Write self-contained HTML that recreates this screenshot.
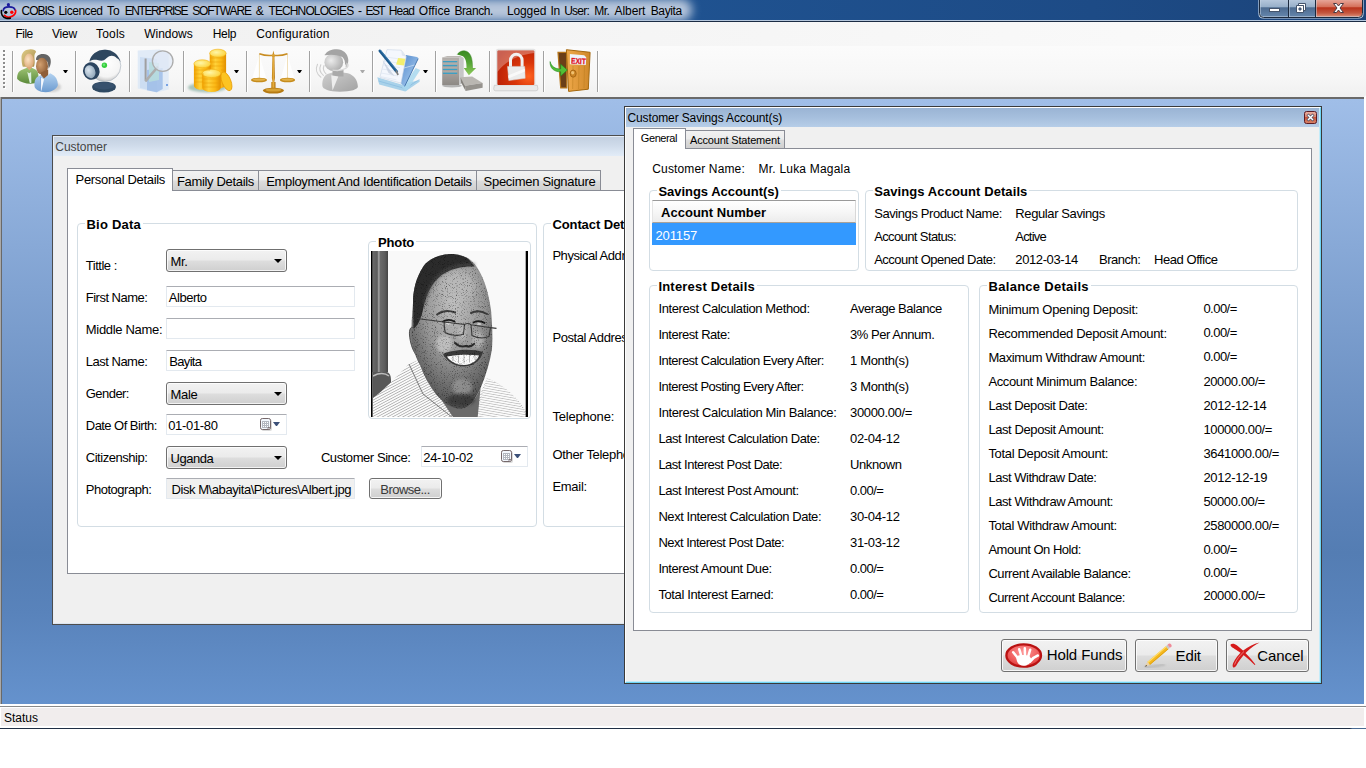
<!DOCTYPE html>
<html lang="en"><head><meta charset="utf-8"><title>COBIS</title>
<style>
html,body{margin:0;padding:0;background:#fff;overflow:hidden}
body{width:1366px;height:768px;position:relative;font-family:"Liberation Sans",sans-serif;font-size:13px;color:#000}
div,span.t,svg{position:absolute;box-sizing:border-box}
.t{white-space:pre}
.gb{border:1px solid #d3dde4;border-radius:4px}
.inp{background:#fff;border:1px solid #e3e9ef;border-top-color:#abadb3;border-radius:1px}
.cmb,.btn,.tab{background:linear-gradient(#f2f2f2 0,#ebebeb 47%,#dddddd 53%,#cfcfcf 100%)}
.cmb{border:1px solid #707070;border-radius:3px;box-shadow:inset 0 0 0 1px rgba(255,255,255,.75)}
.btn{border:1px solid #707070;border-radius:3px;box-shadow:inset 0 0 0 1px rgba(255,255,255,.8)}
.tab{border:1px solid #898c95;border-bottom:none}
.tabsel{border:1px solid #898c95;border-bottom:none;background:#fff}
.sep{width:1px;background:#a2a2a2;box-shadow:1px 0 0 #fff}
.arr{width:0;height:0;border-left:4px solid transparent;border-right:4px solid transparent;border-top:4px solid #000}
</style></head><body>
<div style="left:0px;top:0px;width:1366px;height:22px;background:linear-gradient(90deg,#2b5c9b 0,#1f5290 50%,#1d4b86 80%,#1b4379 100%);overflow:hidden"><div style="left:-30px;top:-1px;width:722px;height:22px;border-radius:11px;background:#c0cde0;filter:blur(5px);opacity:.95"></div></div>
<div style="left:0px;top:20px;width:1366px;height:1px;background:#b4c6dc"></div>
<div style="left:0px;top:21px;width:1366px;height:1px;background:#1b2c44"></div>
<span class="t" style="left:21.5px;top:4px;font-size:12px;line-height:14px;color:#000"><span style="display:inline-block;width:36.9px;letter-spacing:-1.008px">COBIS </span><span style="display:inline-block;width:48.6px;letter-spacing:-0.492px">Licenced </span><span style="display:inline-block;width:17.8px;letter-spacing:-0.037px">To </span><span style="display:inline-block;width:67.4px;letter-spacing:-1.448px">ENTERPRISE </span><span style="display:inline-block;width:63.5px;letter-spacing:-1.094px">SOFTWARE </span><span style="display:inline-block;width:12.8px;letter-spacing:0.296px">&amp; </span><span style="display:inline-block;width:89.5px;letter-spacing:-0.879px">TECHNOLOGIES </span><span style="display:inline-block;width:7.6px;letter-spacing:0.304px">- </span><span style="display:inline-block;width:23.1px;letter-spacing:-1.646px">EST </span><span style="display:inline-block;width:30.2px;letter-spacing:-0.772px">Head </span><span style="display:inline-block;width:35.6px;letter-spacing:0.029px">Office </span><span style="display:inline-block;width:52.5px;letter-spacing:-0.408px">Branch. </span><span style="display:inline-block;width:43.6px;letter-spacing:-0.124px">Logged </span><span style="display:inline-block;width:13.6px;letter-spacing:-0.404px">In </span><span style="display:inline-block;width:30.2px;letter-spacing:-0.714px">User: </span><span style="display:inline-block;width:20.3px;letter-spacing:-0.521px">Mr. </span><span style="display:inline-block;width:36.1px;letter-spacing:-0.108px">Albert </span><span style="display:inline-block;width:33.2px;letter-spacing:-0.359px">Bayita</span></span>
<div style="left:0px;top:22px;width:1366px;height:24px;background:linear-gradient(90deg,#f0f0f0 0,#f3f3f3 30%,#fbfbfb 100%)"></div>
<span class="t" style="left:15.4px;top:27px;font-size:12px;line-height:14px;letter-spacing:-0.484px;">File</span>
<span class="t" style="left:52px;top:27px;font-size:12px;line-height:14px;letter-spacing:-0.223px;">View</span>
<span class="t" style="left:96px;top:27px;font-size:12px;line-height:14px;letter-spacing:0.197px;">Tools</span>
<span class="t" style="left:144.2px;top:27px;font-size:12px;line-height:14px;letter-spacing:-0.026px;">Windows</span>
<span class="t" style="left:212.7px;top:27px;font-size:12px;line-height:14px;letter-spacing:-0.295px;">Help</span>
<span class="t" style="left:256.2px;top:27px;font-size:12px;line-height:14px;letter-spacing:0.163px;">Configuration</span>
<div style="left:0px;top:46px;width:1366px;height:51px;background:linear-gradient(#fbfbfb 0,#f7f7f7 60%,#f0f0f0 100%);border-radius:0 0 3px 0"></div>
<div style="left:4px;top:51px;width:2px;height:38px;background:repeating-linear-gradient(#fff 0,#fff 2px,transparent 2px,transparent 4px)"></div><div style="left:3px;top:50px;width:2px;height:38px;background:repeating-linear-gradient(#8c8c8c 0,#8c8c8c 2px,transparent 2px,transparent 4px)"></div>
<div class="sep" style="left:12px;top:51px;width:1px;height:41px;"></div>
<div class="sep" style="left:75px;top:51px;width:1px;height:41px;"></div>
<div class="sep" style="left:129px;top:51px;width:1px;height:41px;"></div>
<div class="sep" style="left:183px;top:51px;width:1px;height:41px;"></div>
<div class="sep" style="left:246px;top:51px;width:1px;height:41px;"></div>
<div class="sep" style="left:309px;top:51px;width:1px;height:41px;"></div>
<div class="sep" style="left:372px;top:51px;width:1px;height:41px;"></div>
<div class="sep" style="left:435px;top:51px;width:1px;height:41px;"></div>
<div class="sep" style="left:489px;top:51px;width:1px;height:41px;"></div>
<div class="sep" style="left:543px;top:51px;width:1px;height:41px;"></div>
<div class="sep" style="left:597px;top:51px;width:1px;height:41px;"></div>
<div class="arr" style="left:63px;top:70px;width:5px;height:3px;border-left-width:2.5px;border-right-width:2.5px;border-top-width:3px"></div>
<div class="arr" style="left:234px;top:70px;width:5px;height:3px;border-left-width:2.5px;border-right-width:2.5px;border-top-width:3px"></div>
<div class="arr" style="left:297px;top:70px;width:5px;height:3px;border-left-width:2.5px;border-right-width:2.5px;border-top-width:3px"></div>
<div class="arr" style="left:423px;top:70px;width:5px;height:3px;border-left-width:2.5px;border-right-width:2.5px;border-top-width:3px"></div>
<div class="arr" style="left:360px;top:70px;width:5px;height:3px;border-left-width:2.5px;border-right-width:2.5px;border-top-width:3px;border-top-color:#a9a9a9"></div>
<div style="left:0px;top:97px;width:1364px;height:607px;background:linear-gradient(#a0bee8 0,#688dc0 56%,#5b82b8 67%,#547db3 75%,#5983bb 85%,#6592cd 100%);border-top:2px solid #696969;border-left:2px solid #696969;border-top-color:#6a6a6a"></div>
<div style="left:0px;top:97px;width:1px;height:607px;background:#a9a9a9"></div>
<div style="left:0px;top:706px;width:1366px;height:1px;background:#8a8a8a"></div>
<div style="left:1px;top:708px;width:1363px;height:18px;background:#f1eded"></div>
<div style="left:0px;top:728px;width:1366px;height:1px;background:linear-gradient(90deg,#1f2e44 0,#1f2e44 98.8%,#4a6a92 99%)"></div>
<span class="t" style="left:4px;top:711px;font-size:12px;line-height:14px;letter-spacing:-0.003px;">Status</span>
<svg width="20" height="22" viewBox="0 0 20 22" style="left:0;top:0">
<circle cx="8.4" cy="4.7" r="1.6" fill="#1a1a9c"/>
<path d="M3.2 10.6C3.4 8 6 6.9 9 6.9c3.2 0 5.6 1 5.9 3" fill="none" stroke="#1a1a9c" stroke-width="1.7" stroke-linecap="round"/>
<circle cx="5.8" cy="12.3" r="1.6" fill="#000"/>
<circle cx="11.8" cy="12.2" r="1.7" fill="#f00"/>
<path d="M4.4 15.4c2 2 5.5 2.2 8.2.6 2.3-1.4 3.3-3.3 3-5.6" fill="none" stroke="#f00" stroke-width="1.7" stroke-linecap="round"/>
<path d="M1.4 10.6c-.5 3.2 1.2 6.6 4.8 7.6 1.4.4 2.8.3 4 0" fill="none" stroke="#000" stroke-width="1.7" stroke-linecap="round"/>
</svg>
<svg width="106" height="20" viewBox="1258 0 106 20" style="left:1258px;top:0">
<defs>
<linearGradient id="cg" x1="0" y1="0" x2="0" y2="1"><stop offset="0" stop-color="#b9cade"/><stop offset=".45" stop-color="#97afc9"/><stop offset=".5" stop-color="#4d6b90"/><stop offset="1" stop-color="#6485ab"/></linearGradient>
<linearGradient id="cr" x1="0" y1="0" x2="0" y2="1"><stop offset="0" stop-color="#e9aca0"/><stop offset=".45" stop-color="#d5705a"/><stop offset=".5" stop-color="#b9321b"/><stop offset=".8" stop-color="#c4573f"/><stop offset="1" stop-color="#d98a74"/></linearGradient>
</defs>
<path d="M1259.5-1v14.5q0 4 4 4h95q4 0 4-4v-14.5z" fill="#c9d7e7" stroke="#c9d7e7" stroke-width="2.2"/>
<path d="M1260.5-1v14.5q0 3 3 3h25v-17.5z" fill="url(#cg)"/>
<path d="M1289.500-1h26v17.500h-26z" fill="url(#cg)"/>
<path d="M1316.500-1h45.500v14.500q0 3-3 3h-42.500z" fill="url(#cr)"/>
<path d="M1259.500-1v14.500q0 4 4 4h95q4 0 4-4v-14.500M1288.500-1v18M1315.500-1v18" fill="none" stroke="#1c2a3e" stroke-width="1"/>
<rect x="1269.500" y="8.500" width="10" height="3" fill="#fff" stroke="#44546c" stroke-width="1"/>
<path d="M1298.500 3.500h7v7h-2v-5h-5z" fill="#fff" stroke="#44546c" stroke-width="1"/>
<path d="M1296.500 5.500h7v7h-7zM1299 8h2v2h-2z" fill="#fff" fill-rule="evenodd" stroke="#44546c" stroke-width="1"/>
<path d="M1333.500 3.500h3l2 2.500 2-2.500h3l-3.500 4.500 3.500 4.500h-3l-2-2.500-2 2.500h-3l3.500-4.500z" fill="#fff" stroke="#4a3a44" stroke-width="1" stroke-linejoin="round"/>
</svg>
<svg width="600" height="51" viewBox="0 46 600 51" style="left:0;top:46px">
<defs>
<radialGradient id="skinW" cx=".4" cy=".4" r=".7"><stop offset="0" stop-color="#fbe2c2"/><stop offset="1" stop-color="#d7a06e"/></radialGradient>
<radialGradient id="skinM" cx=".35" cy=".4" r=".75"><stop offset="0" stop-color="#d2a070"/><stop offset="1" stop-color="#86552f"/></radialGradient>
<linearGradient id="hairW" x1="0" y1="0" x2="1" y2="1"><stop offset="0" stop-color="#e0cc88"/><stop offset="1" stop-color="#a68a48"/></linearGradient>
<linearGradient id="grn" x1="0" y1="0" x2="0" y2="1"><stop offset="0" stop-color="#9cc272"/><stop offset="1" stop-color="#5b8a3a"/></linearGradient>
<linearGradient id="blu" x1="0" y1="0" x2="0" y2="1"><stop offset="0" stop-color="#b3d2f0"/><stop offset="1" stop-color="#6c9bd0"/></linearGradient>
<radialGradient id="camw" cx=".55" cy=".4" r=".65"><stop offset="0" stop-color="#ffffff"/><stop offset=".7" stop-color="#f4f4f4"/><stop offset="1" stop-color="#b4b4b4"/></radialGradient>
<radialGradient id="lens" cx=".4" cy=".35" r=".7"><stop offset="0" stop-color="#d9e4ee"/><stop offset="1" stop-color="#8fa5b8"/></radialGradient>
<linearGradient id="gold" x1="0" y1="0" x2="1" y2="0"><stop offset="0" stop-color="#f0a000"/><stop offset=".35" stop-color="#ffd23a"/><stop offset=".7" stop-color="#fbb714"/><stop offset="1" stop-color="#e08e00"/></linearGradient>
<radialGradient id="goldtop" cx=".4" cy=".4" r=".7"><stop offset="0" stop-color="#fff6a8"/><stop offset="1" stop-color="#fccf30"/></radialGradient>
<linearGradient id="brass" x1="0" y1="0" x2="1" y2="0"><stop offset="0" stop-color="#b97a12"/><stop offset=".5" stop-color="#e7ae3c"/><stop offset="1" stop-color="#a96a0c"/></linearGradient>
<radialGradient id="ghead" cx=".35" cy=".4" r=".75"><stop offset="0" stop-color="#ececec"/><stop offset="1" stop-color="#a6a6a6"/></radialGradient>
<linearGradient id="gbody" x1="0" y1="0" x2="1" y2="1"><stop offset="0" stop-color="#cfcfcf"/><stop offset="1" stop-color="#a2a2a2"/></linearGradient>
<linearGradient id="fold" x1="0" y1="0" x2="1" y2="1"><stop offset="0" stop-color="#4f86cb"/><stop offset="1" stop-color="#b5d6f4"/></linearGradient>
<linearGradient id="srv" x1="0" y1="0" x2="0" y2="1"><stop offset="0" stop-color="#b3aeaa"/><stop offset=".6" stop-color="#a39e9a"/><stop offset="1" stop-color="#8d8985"/></linearGradient>
<linearGradient id="garr" x1="0" y1="0" x2="0" y2="1"><stop offset="0" stop-color="#3a8a22"/><stop offset=".5" stop-color="#56a536"/><stop offset="1" stop-color="#8fcb5c"/></linearGradient>
<radialGradient id="redsq" cx=".85" cy=".75" r="1"><stop offset="0" stop-color="#ff6220"/><stop offset=".4" stop-color="#d9360a"/><stop offset="1" stop-color="#b31c06"/></radialGradient>
<linearGradient id="door" x1="0" y1="0" x2="1" y2="0"><stop offset="0" stop-color="#efa94a"/><stop offset="1" stop-color="#cf882a"/></linearGradient>
<filter id="b1"><feGaussianBlur stdDeviation="1.2"/></filter>
<filter id="b05"><feGaussianBlur stdDeviation=".5"/></filter>
</defs>

<!-- 1 users -->
<g>
<ellipse cx="52" cy="87" rx="9" ry="5" fill="#bdbdbd" opacity=".7" filter="url(#b1)"/>
<path d="M21.500 58C21.300 52.500 25 49.400 29.300 49.500c3-.6 6.600.6 6.800 2.400-1.200 1.200-1.800 2.800-1.700 5 .1 2.500.6 5 .1 7.500-.3 1.500-.6 2.200-.7 2.400h-11c-.8-2.200-1.200-5-1.300-8.800z" fill="url(#hairW)"/>
<ellipse cx="29" cy="61" rx="4.900" ry="7.500" fill="url(#skinW)"/>
<path d="M27 67h4.900v5.500H27z" fill="#dba878"/>
<path d="M17.200 79c-.4-5.500 1.800-8.600 5.600-9.600l4.200-1.600 2.300 2.500 2.400-2.500 3.200 1.400c2.500 1.200 3.500 3.500 3.500 6.100v7c-6 2.400-16 2-21.200-3.300z" fill="url(#grn)"/>
<path d="M27.300 72l2 1.300 1.800-1.300.3 10.800-1.600.4z" fill="#dcefe2"/>
<path d="M36.100 60c-.4-4 3-6.200 7.500-5.900 4.800.3 7.500 3.400 7.200 8-.2 3-1 5-2.200 6.600l-.6-5.200c-.3-1.600-1.200-2.600-2.600-2.800-3.200-.5-6.300-.9-9.300-.7z" fill="#646464"/>
<ellipse cx="42" cy="66.200" rx="6" ry="8.400" fill="url(#skinM)"/>
<path d="M41 72.500l7.200-3v9.500H41z" fill="#8f5e38"/>
<path d="M34.500 86c-.4-5.500 1.400-9 4.500-10l2-1 3 3.600 6.100-5.300 1.400.8c4 2 6.200 5.500 6.400 10.300.2 2.800-5 7.800-12.300 7.800-6.600 0-10.900-3-11.100-6.200z" fill="url(#blu)"/>
<path d="M41 77.600l3 1.600-2.600 11.600-.6-.2z" fill="#f4f8fd"/>
<path d="M40.600 77v13.600" stroke="#6f9bd0" stroke-width=".6"/>
</g>

<!-- 2 webcam -->
<g>
<ellipse cx="104" cy="87" rx="11.900" ry="5.600" fill="#2f4962"/>
<ellipse cx="104" cy="85.800" rx="10.500" ry="3.600" fill="#3a5672" opacity=".7"/>
<circle cx="105" cy="65.700" r="15.800" fill="url(#camw)" stroke="#a3aebb" stroke-width=".6"/>
<path d="M89.400 61.500C90.800 54.500 97 49.700 105 49.700c7.500 0 13.500 4.800 15.600 12.300-1.200-1.800-2.500-3.200-3.700-3.700-1.800-1.800-3.600-2.500-5-2.500-2.500 0-3.600 1-4.600 1.800-1.600 1.400-3 2.800-4.600 3-1.600.2-3.400-.4-5.200-.6-2.600-.4-5.200-.2-8.100 1.200z" fill="#2f475f"/>
<ellipse cx="91.300" cy="71.100" rx="8.200" ry="8.800" fill="#2c4560" transform="rotate(-20 91.300 71.100)"/>
<ellipse cx="90.100" cy="71.700" rx="5.200" ry="6.600" fill="url(#lens)" transform="rotate(-20 90.100 71.700)"/>
<circle cx="104.400" cy="65.200" r="2.700" fill="#36d03e"/>
<circle cx="104" cy="64.700" r="1.200" fill="#7be783" opacity=".8"/>
</g>

<!-- 3 folder + magnifier (disabled look) -->
<g opacity=".8">
<path d="M137.700 50.500l22-1 9 4v36l-12 3-19-4z" fill="#dbe8f7"/>
<path d="M140 57l17 2v33l-17-4z" fill="#c3d8f2"/>
<path d="M147 70l15.700-2v21l-6 3.300-9.700-2z" fill="#8db3e6" opacity=".9"/>
<path d="M149 62l10 1v17l-10 2z" fill="#a8d6d8" opacity=".9"/>
<path d="M145.600 58.500v22" stroke="#8b8b8b" stroke-width="2" fill="none"/>
<path d="M157.200 67.500L146 80.600" stroke="#9c9c9c" stroke-width="2.600" stroke-linecap="round"/>
<circle cx="162.700" cy="61.100" r="10.300" fill="#dbe6f6" fill-opacity=".75" stroke="#9a9a9a" stroke-width="1.300"/>
<rect x="166" y="84" width="2" height="2" fill="#5b8fe0"/>
</g>

<!-- 4 coins -->
<g>
<ellipse cx="207" cy="87.500" rx="19" ry="5" fill="#a9c4bc" filter="url(#b1)"/>
<path d="M209.700 53.200v31.200a8.200 4 0 0 0 16.400 0v-31.200z" fill="url(#gold)"/>
<ellipse cx="217.900" cy="53.200" rx="8.200" ry="4" fill="url(#goldtop)" stroke="#f2b21a" stroke-width=".6"/>
<path d="M193.900 63.800v22a8.400 4 0 0 0 16.800 0v-22z" fill="url(#gold)"/>
<ellipse cx="202.300" cy="63.800" rx="8.400" ry="4" fill="url(#goldtop)" stroke="#f2b21a" stroke-width=".6"/>
<path d="M202.200 73.400v14.400a9.300 4.200 0 0 0 18.600 0v-14.400z" fill="url(#gold)"/>
<ellipse cx="211.500" cy="73.400" rx="9.300" ry="4.200" fill="url(#goldtop)" stroke="#f2b21a" stroke-width=".6"/>
<ellipse cx="226.400" cy="81.300" rx="4.400" ry="10" fill="#fcc422" stroke="#e89c06" stroke-width=".8" transform="rotate(-22 226.400 81.300)"/>
<path d="M194 70h16M194 74h10M194 78h9M194 82h9M210 58h16M210 62h16M210 66h16M221 70h5M203 79h17M203 83h17M203 87h17" stroke="#e79a00" stroke-width=".7" opacity=".7"/>
</g>

<!-- 5 scales -->
<g>
<path d="M259.400 54.500L252 79h14.500zM287.500 54.500L280.600 79h14z" fill="#fff" opacity=".8"/><path d="M259.400 54.500v25M287.500 54.500v25" stroke="#e6c98a" stroke-width=".6"/>
<path d="M259.300 53.700c5 1.800 9.500 2.300 14.100 1.500 4.600.8 9.100.3 14.100-1.500" fill="none" stroke="#c98d22" stroke-width="1.500"/>
<path d="M272.400 56h2l.5 22-.6 4h-1.800l-.6-4z" fill="url(#brass)"/>
<path d="M273.400 50.500l.9 4h-1.800z" fill="#c98d22"/>
<circle cx="273.400" cy="55.500" r="1.500" fill="#d9a030"/>
<ellipse cx="259" cy="80" rx="8" ry="2.300" fill="#c68c1c"/>
<ellipse cx="259" cy="79.600" rx="6.500" ry="1.200" fill="#e2b24c"/>
<ellipse cx="287.500" cy="80" rx="7.600" ry="2.300" fill="#c68c1c"/>
<ellipse cx="287.500" cy="79.600" rx="6" ry="1.200" fill="#e2b24c"/>
<path d="M271.300 82h4.200v8h-4.200z" fill="url(#brass)"/>
<ellipse cx="273.400" cy="90.600" rx="10.600" ry="2.900" fill="#b67a12"/>
<ellipse cx="273.400" cy="90" rx="8" ry="1.600" fill="#d7a236"/>
</g>

<!-- 6 gray agent (disabled) -->
<g>
<path d="M322.400 86c-.4-6 1.500-10.200 5-12l5-1.500h10.500l5 .8c6 2 9.600 6.500 10 13.200.2 2.800-7 5.200-18 5.200s-17.300-2.700-17.500-5.700z" fill="url(#gbody)"/>
<path d="M332.500 70h11v6.500h-11z" fill="#a9a9a9"/>
<path d="M331.200 75.300l7.100 1.300-5.800 13.900z" fill="#ededed"/>
<ellipse cx="333.800" cy="62.300" rx="9.400" ry="8.900" fill="url(#ghead)"/>
<path d="M325.300 54.200c2-3.400 6.500-5 11.700-4.900 6 .3 10.500 4 11.200 9.700.3 2.500-.2 4.500-.8 6l-2.400-.5c.3-3-.8-5.500-2.800-7.400-5.500-2.600-11-3-17-1.800-.8-.2-.6-.8.100-1.100z" fill="#a4a4a4"/>
<path d="M346 62.500c1 .2 1.600 1.200 1.500 2.600-.2 1.600-1 2.600-2 2.500z" fill="#c4c4c4"/>
<path d="M347.500 63.600c1 1.600.4 3.400-1.500 4.700-3.500 2.200-8.500 2.600-13.500 1.800" fill="none" stroke="#d9d9d9" stroke-width="1.300"/>
<path d="M324 65.500c-1.200 3-.4 6 2 8.300M320.800 64.800c-1.800 4-.6 8 2.600 10.600M317.500 64.200c-2.300 5-.8 10 3.400 13" fill="none" stroke="#cfcfcf" stroke-width="1.100" stroke-linecap="round"/>
</g>

<!-- 7 notes -->
<g>
<path d="M377.300 77.300l24 7.100 18.300-4.500v1.900l-14.300 9.800-26.100-7.200z" fill="#8fc5e6" opacity=".75"/>
<path d="M378.500 81l26.500 7.500 14.500-9" fill="none" stroke="#7db6dc" stroke-width=".7" opacity=".8"/>
<path d="M415.700 68.100l4.500 2-13.600 20.800-4.600-3.200z" fill="#a8d8ee" opacity=".85"/>
<path d="M405.900 55.100l11 2q1.800.4 1.200 2l-13.500 27.300-4.600-3.900z" fill="url(#fold)"/>
<path d="M418.200 58.600l-13.600 27.800" stroke="#3f70aa" stroke-width=".9" fill="none"/>
<path d="M404 68l10.500-3" stroke="#dcebf8" stroke-width=".8" opacity=".8"/>
<path d="M387 49.600l14.300.6 4.900 6.500-5.200 26.400-21.100-5.800z" fill="#f4f7fd" stroke="#c9d5e6" stroke-width=".6"/>
<path d="M401.300 50.200l.6 5.200 4.300 1.300z" fill="#dfe6f0"/>
<path d="M385 57l17 2.200M384 61l17 2.400M383 65l17 2.600M382 69l17 2.800M381 73l17 3M380.400 76.600l16 3.200" stroke="#dfe7f3" stroke-width=".8"/>
<path d="M382.500 60l12 16-6-3z" fill="#b7c3d6" opacity=".6"/>
<path d="M398.100 58l7.200.7-1.300 6.800-7.900-.9z" fill="#f3ef6e"/>
<path d="M379.900 50.900l16.600 20.500" stroke="#1d5a8d" stroke-width="2.800" stroke-linecap="round"/>
<path d="M380.600 50.400l16.600 20.500" stroke="#4d8fc4" stroke-width=".8" stroke-linecap="round" opacity=".8"/>
<path d="M396.300 71.200l1.500 3.100" stroke="#7d7d7d" stroke-width="1.800" stroke-linecap="round"/>
</g>

<!-- 8 server + arrow -->
<g>
<ellipse cx="452" cy="85.800" rx="10" ry="1.600" fill="#8a8a8a" opacity=".6" filter="url(#b05)"/>
<path d="M442.200 57.400h16.900v27.600h-16.900z" fill="url(#srv)"/>
<path d="M459.100 57.400l4.600.6v24.500l-4.600 2.500z" fill="#c6c6c6"/>
<path d="M442.200 57.400l5-1.400h13l3.500 2-4.600-.6z" fill="#bdb9b5"/>
<path d="M442.900 61.600h14.300M442.900 65.500h14.300M442.900 69.400h14.300M442.900 73.300h14.300" stroke="#3c9fc4" stroke-width="1.400"/>
<path d="M442.900 60.200h14.300M442.900 64.100h14.300M442.900 68h14.300M442.900 71.900h14.300" stroke="#c9c5c0" stroke-width=".6" opacity=".7"/>
<path d="M457.200 54.500c2-3 5-4.200 8-3.600 5 1 7.600 6.500 7.300 17.200h3.600l-7.200 7.200-5.200-7.200h2.800c.2-6-1-10-3.600-11.800-1.800-1.200-3.900-.8-5.700-1.800z" fill="url(#garr)"/>
<path d="M457.200 54.500c2-3 5-4.200 8-3.600 5 1 7.600 6.500 7.300 17.200" fill="none" stroke="#357f1f" stroke-width=".6" opacity=".7"/>
<path d="M460.400 77.300l11.800-.7 10.400 6.500-17.600 2.600z" fill="#bab7b2"/>
<path d="M465 85.700l17.600-2.600v4.600l-17 3.200z" fill="#96938e"/>
<path d="M460.400 77.300l4.600 8.400.6 5.200-4.500-8.400z" fill="#85827d"/>
</g>

<!-- 9 lock -->
<g>
<path d="M494.300 85.300h43l.6 3.500q0 2-2 2h-40.200q-2 0-2-2z" fill="#e9e9e9" stroke="#bdbdbd" stroke-width=".6"/>
<rect x="496" y="48.800" width="39.600" height="37" rx="2" fill="#e4e4e4"/>
<rect x="497.400" y="50.600" width="36.900" height="34.300" rx="1" fill="url(#redsq)"/>
<path d="M497.400 50.600h36.900v2.500c-15 2-29 7.500-36.900 19z" fill="#fff" opacity=".3"/>
<path d="M510.500 67v-6.500a5.800 6.300 0 0 1 11.600 0V67" fill="none" stroke="#f1f1f1" stroke-width="3"/>
<path d="M507.500 66.400h17.200l.5 11.900-16.400 2.300z" fill="#ececec" stroke="#d0d0d0" stroke-width=".5"/>
<path d="M508 75.500l17-7v3l-16.700 7z" fill="#fff" opacity=".7"/>
</g>

<!-- 10 exit -->
<g>
<path d="M558 52.300h8.800v35.600h-6.100z" fill="#6b3f18" stroke="#b7761c" stroke-width="1.200"/>
<path d="M566.400 49.700l23.700 2.600-1.800 36.900-19.700 2.200z" fill="url(#door)" stroke="#a4680f" stroke-width="1"/>
<path d="M573 66l-.3 23M579 66l-.4 23M584.500 66l-.5 22" stroke="#c07f22" stroke-width=".6"/>
<path d="M569.900 54.100l14.300 1.200 2 2-.4 7.800-15.900-.8z" fill="#eef4fb"/>
<text x="571" y="63.600" font-family="Liberation Sans, sans-serif" font-weight="700" font-size="8" fill="#e0101c" stroke="#e0101c" stroke-width=".3" textLength="14.800" lengthAdjust="spacingAndGlyphs" transform="rotate(2.500 571 63)">EXIT</text>
<ellipse cx="573.200" cy="73.600" rx="3" ry="3.600" fill="#c98324" stroke="#98590c" stroke-width=".7"/><ellipse cx="572.700" cy="72.800" rx="1.600" ry="1.800" fill="#f0c070"/>
<path d="M550.100 61.600c1.400 5 5 7.500 10.600 7.400v-4.800l6.600 5.800-6.600 6v-4.200c-7 .2-11-4-10.600-10.200z" fill="#52bf36" stroke="#238a20" stroke-width=".6"/>
</g>
</svg>
<div style="left:52px;top:135px;width:648px;height:490px;background:#f0f0f0;border:1px solid #4d4d4d;box-shadow:inset 1px 1px 0 #e6edf6,inset -1px -1px 0 #dbe5f1"></div>
<div style="left:54px;top:137px;width:644px;height:19px;background:linear-gradient(#c3d0e1 0,#cfdbea 45%,#dbe6f3 80%,#e2ecf7 100%)"></div>
<span class="t" style="left:55.3px;top:140px;font-size:12px;line-height:14px;letter-spacing:-0.052px;color:#454545;">Customer</span>
<div style="left:67px;top:190px;width:640px;height:384px;background:#fff;border:1px solid #898c95"></div>
<div class="tabsel" style="left:67px;top:168px;width:106px;height:23px;"></div>
<div class="tab" style="left:172px;top:170px;width:87px;height:20px;"></div>
<div class="tab" style="left:258px;top:170px;width:219px;height:20px;"></div>
<div class="tab" style="left:476px;top:170px;width:125px;height:20px;"></div>
<span class="t" style="left:75.6px;top:172px;font-size:13px;line-height:15px;letter-spacing:-0.329px;">Personal Details</span>
<span class="t" style="left:177px;top:174px;font-size:13px;line-height:15px;letter-spacing:-0.337px;">Family Details</span>
<span class="t" style="left:266.2px;top:174px;font-size:13px;line-height:15px;letter-spacing:-0.344px;">Employment And Identification Details</span>
<span class="t" style="left:483.6px;top:174px;font-size:13px;line-height:15px;letter-spacing:-0.287px;">Specimen Signature</span>
<div class="gb" style="left:77px;top:223px;width:460px;height:304px;"></div>
<div style="left:85px;top:220px;width:58px;height:8px;background:#fff"></div>
<span class="t" style="left:86.5px;top:217px;font-size:13px;line-height:15px;font-weight:700;letter-spacing:0.221px;">Bio Data</span>
<div class="gb" style="left:543px;top:223px;width:200px;height:304px;"></div>
<div style="left:551px;top:220px;width:97px;height:8px;background:#fff"></div>
<span class="t" style="left:552.4px;top:217px;font-size:13px;line-height:15px;font-weight:700;letter-spacing:-0.095px;">Contact Details</span>
<div class="gb" style="left:368px;top:241px;width:163px;height:178px;"></div>
<div style="left:376px;top:238px;width:40px;height:8px;background:#fff"></div>
<span class="t" style="left:377.9px;top:235px;font-size:13px;line-height:15px;font-weight:700;letter-spacing:-0.105px;">Photo</span>
<span class="t" style="left:85.8px;top:258px;font-size:13px;line-height:15px;letter-spacing:-0.489px;">Tittle :</span>
<span class="t" style="left:85.8px;top:290px;font-size:13px;line-height:15px;letter-spacing:-0.516px;">First Name:</span>
<span class="t" style="left:85.8px;top:322px;font-size:13px;line-height:15px;letter-spacing:-0.316px;">Middle Name:</span>
<span class="t" style="left:85.8px;top:354px;font-size:13px;line-height:15px;letter-spacing:-0.497px;">Last Name:</span>
<span class="t" style="left:85.8px;top:386px;font-size:13px;line-height:15px;letter-spacing:-0.553px;">Gender:</span>
<span class="t" style="left:85.8px;top:418px;font-size:13px;line-height:15px;letter-spacing:-0.554px;">Date Of Birth:</span>
<span class="t" style="left:85.8px;top:450px;font-size:13px;line-height:15px;letter-spacing:-0.475px;">Citizenship:</span>
<span class="t" style="left:85.8px;top:482px;font-size:13px;line-height:15px;letter-spacing:-0.485px;">Photograph:</span>
<span class="t" style="left:320.9px;top:450px;font-size:13px;line-height:15px;letter-spacing:-0.439px;">Customer Since:</span>
<span class="t" style="left:552.4px;top:248px;font-size:13px;line-height:15px;letter-spacing:-0.453px;">Physical Address:</span>
<span class="t" style="left:552.4px;top:329.5px;font-size:13px;line-height:15px;letter-spacing:-0.409px;">Postal Address:</span>
<span class="t" style="left:552.4px;top:409px;font-size:13px;line-height:15px;letter-spacing:-0.191px;">Telephone:</span>
<span class="t" style="left:552.4px;top:447px;font-size:13px;line-height:15px;letter-spacing:-0.311px;">Other Telephone:</span>
<span class="t" style="left:552.4px;top:478.5px;font-size:13px;line-height:15px;letter-spacing:-0.283px;">Email:</span>
<div class="cmb" style="left:166px;top:249px;width:121px;height:23px;"></div>
<span class="t" style="left:170.6px;top:254px;font-size:13px;line-height:15px;letter-spacing:-0.384px;">Mr.</span>
<div class="arr" style="left:274px;top:259px;width:8px;height:4px;"></div>
<div class="cmb" style="left:166px;top:382px;width:121px;height:23px;"></div>
<span class="t" style="left:170.6px;top:387px;font-size:13px;line-height:15px;letter-spacing:-0.344px;">Male</span>
<div class="arr" style="left:274px;top:392px;width:8px;height:4px;"></div>
<div class="cmb" style="left:166px;top:446px;width:121px;height:23px;"></div>
<span class="t" style="left:170.6px;top:451px;font-size:13px;line-height:15px;letter-spacing:-0.456px;">Uganda</span>
<div class="arr" style="left:274px;top:456px;width:8px;height:4px;"></div>
<div class="inp" style="left:166px;top:286px;width:189px;height:21px;"></div>
<div class="inp" style="left:166px;top:318px;width:189px;height:21px;"></div>
<div class="inp" style="left:166px;top:350px;width:189px;height:21px;"></div>
<span class="t" style="left:168.8px;top:290px;font-size:13px;line-height:15px;letter-spacing:-0.484px;">Alberto</span>
<span class="t" style="left:169.3px;top:354px;font-size:13px;line-height:15px;letter-spacing:-0.689px;">Bayita</span>
<div class="inp" style="left:166px;top:478px;width:189px;height:21px;background:#f0f0f0"></div>
<span class="t" style="left:171.5px;top:482px;font-size:13px;line-height:15px;letter-spacing:-0.434px;">Disk M\abayita\Pictures\Albert.jpg</span>
<div class="inp" style="left:166px;top:414px;width:121px;height:21px;"></div>
<span class="t" style="left:168.2px;top:418px;font-size:13px;line-height:15px;letter-spacing:-0.33px;">01-01-80</span>
<svg width="13" height="14" viewBox="0 0 13 14" style="left:260px;top:418px"><rect x="1.500" y="1.500" width="10.500" height="11.500" rx="2" fill="#b5b5b5" opacity=".5"/><rect x=".5" y=".5" width="10" height="11" rx="1.800" fill="#f3f7fd" stroke="#75686a"/><rect x="2" y="3" width="7" height="7" fill="#b3b7c0"/><path d="M3 4.500h5M3 6.500h5M3 8.500h5" stroke="#fff" stroke-width="1" stroke-dasharray="1 1"/><path d="M8 12v-2.500h2.500" fill="none" stroke="#75686a" stroke-width=".8"/></svg>
<div class="arr" style="left:273px;top:422px;width:7px;height:4px;border-left-width:3.5px;border-right-width:3.5px;border-top-color:#3c5078"></div>
<div class="inp" style="left:421px;top:446px;width:107px;height:21px;"></div>
<span class="t" style="left:423.3px;top:450px;font-size:13px;line-height:15px;letter-spacing:-0.317px;">24-10-02</span>
<svg width="13" height="14" viewBox="0 0 13 14" style="left:501px;top:450px"><rect x="1.500" y="1.500" width="10.500" height="11.500" rx="2" fill="#b5b5b5" opacity=".5"/><rect x=".5" y=".5" width="10" height="11" rx="1.800" fill="#f3f7fd" stroke="#75686a"/><rect x="2" y="3" width="7" height="7" fill="#b3b7c0"/><path d="M3 4.500h5M3 6.500h5M3 8.500h5" stroke="#fff" stroke-width="1" stroke-dasharray="1 1"/><path d="M8 12v-2.500h2.500" fill="none" stroke="#75686a" stroke-width=".8"/></svg>
<div class="arr" style="left:514px;top:454px;width:7px;height:4px;border-left-width:3.5px;border-right-width:3.5px;border-top-color:#3c5078"></div>
<div class="btn" style="left:369px;top:478px;width:73px;height:21px;"></div>
<span class="t" style="left:380.3px;top:482px;font-size:13px;line-height:15px;letter-spacing:-0.52px;color:#3a3a3a;">Browse...</span>
<svg width="157" height="166" viewBox="371 251 157 166" style="left:371px;top:251px">
<defs>
<radialGradient id="face" cx=".52" cy=".3" r=".75"><stop offset="0" stop-color="#c2c2c2"/><stop offset=".5" stop-color="#959595"/><stop offset=".85" stop-color="#5c5c5c"/><stop offset="1" stop-color="#3c3c3c"/></radialGradient>
<linearGradient id="post" x1="0" y1="0" x2="1" y2="0"><stop offset="0" stop-color="#6a6a6a"/><stop offset=".3" stop-color="#5a5a5a"/><stop offset=".4" stop-color="#a5a5a5"/><stop offset=".5" stop-color="#6a6a6a"/><stop offset=".8" stop-color="#5c5c5c"/><stop offset="1" stop-color="#444"/></linearGradient>
<pattern id="stripe" width="2.400" height="2.400" patternUnits="userSpaceOnUse" patternTransform="rotate(62)"><rect width="2.400" height="2.400" fill="#fbfbfb"/><rect width=".7" height="2.400" fill="#a6a6a6"/></pattern>
<pattern id="stripe2" width="2.400" height="2.400" patternUnits="userSpaceOnUse" patternTransform="rotate(100)"><rect width="2.400" height="2.400" fill="#fbfbfb"/><rect width=".6" height="2.400" fill="#b0b0b0"/></pattern>
<filter id="pb"><feGaussianBlur stdDeviation="1.600"/></filter>
<filter id="pb3"><feGaussianBlur stdDeviation="3"/></filter>
<filter id="grain" x="0" y="0" width="100%" height="100%"><feTurbulence type="fractalNoise" baseFrequency="1.100" numOctaves="2" seed="7" result="n"/><feColorMatrix in="n" type="matrix" values="0 0 0 0 0  0 0 0 0 0  0 0 0 0 0  -2.200 -2.200 0 0 2.050"/><feComposite in2="SourceGraphic" operator="in"/></filter>
<clipPath id="pc"><rect x="371" y="251" width="157" height="166"/></clipPath>
</defs>
<g clip-path="url(#pc)">
<rect x="371" y="251" width="157" height="166" fill="#f9f9f9"/>
<!-- door post on the left -->
<rect x="372.600" y="251" width="15.400" height="121" fill="url(#post)"/>
<path d="M373 372h14c3 1 4 4 4 9v14c-5 3-12 5-18 6z" fill="#585858"/>
<path d="M373 376c6-3 12-3 16 0" stroke="#bdbdbd" stroke-width="1.500" fill="none"/>
<!-- shirt -->
<path d="M373 398c10-7 22-20 36-34l14-6 20 30 30 24 14-34c16 6 34 22 40 36l1 4H373z" fill="url(#stripe)"/>
<path d="M487 378c16 6 32 20 38 36v4h-50z" fill="url(#stripe2)"/>
<path d="M409 364l14 30 30 24" stroke="#7a7a7a" stroke-width="1" fill="none"/>
<!-- neck shadow -->
<path d="M428 380c7 12 20 27 34 29 8-1 14-11 18.600-21l-3 30h-24z" fill="#6a6a6a"/>
<!-- ear -->
<path d="M414 327c-3.500-1-5 3-4.500 8 .5 7 3 15 6 19l4 2z" fill="#7a7a7a" stroke="#333" stroke-width=".8"/>
<!-- head -->
<path d="M450.800 254C440 254 428 259 423.300 266.600 416 278 413 290 413 303c-1 12-2 24-1.200 35 1.200 12 4.200 20 8.200 27 4 11 9 20 15 28 7 9 17 16 27 16 8-1 14-11 18.600-21 5.400-13 9.400-26 11.400-39 1-13 0-27-1-39-2-14-5-26-10.400-36.500C477 266 472 260 466.800 257.500 462 255 456 254 450.800 254z" fill="url(#face)"/>
<!-- highlights -->
<ellipse cx="458" cy="287" rx="17" ry="14" fill="#b9b9b9" opacity=".8" filter="url(#pb3)"/>
<ellipse cx="444" cy="344" rx="8" ry="9" fill="#c9c9c9" opacity=".75" filter="url(#pb)"/>
<ellipse cx="478" cy="340" rx="6" ry="8" fill="#bdbdbd" opacity=".7" filter="url(#pb)"/>
<ellipse cx="462" cy="387" rx="10" ry="8" fill="#9c9c9c" opacity=".7" filter="url(#pb)"/>
<ellipse cx="462" cy="333" rx="4" ry="7" fill="#c4c4c4" opacity=".7" filter="url(#pb)"/>
<!-- hair -->
<path d="M450.800 254C440 254 428 259 423.300 266.600 416 278 413 290 413 303l.6 26c5-4 8-12 10-22 3-13 8-24 18-32 10-7 22-9 33-8.500-2-3-5-7-8.400-9-4.800-2.500-10.800-3.500-16-3.500z" fill="#2b2b2b"/>
<path d="M424 305c3-13 8-24 18-32 10-7 22-9 33-8.500" stroke="#555" stroke-width="3" fill="none" opacity=".6" filter="url(#pb)"/>
<!-- brows / eyes / glasses -->
<path d="M437 314.500c5-3.500 12-4.500 18-2M471 313c5-2.500 11-2 16 1" stroke="#2a2a2a" stroke-width="2" fill="none" stroke-linecap="round" opacity=".85"/>
<path d="M443 321.500c3.500-2 8-2 11.500 0M473.500 322.500c3.500-1.800 7.500-1.600 11 .4" stroke="#1c1c1c" stroke-width="1.800" fill="none" stroke-linecap="round"/>
<ellipse cx="448.500" cy="323.500" rx="2.400" ry="1.200" fill="#d8d8d8"/><ellipse cx="479" cy="324" rx="2.200" ry="1.100" fill="#cfcfcf"/>
<path d="M417 318.500l27 3.500M444 322l20.500 2.500-1 9.500c-5 2.500-13 1.500-18.500-1.500zM464.500 324.500c2.500-1.500 4.500-1.300 6.500.3M471 324.800l19.500 2.800-1.500 9c-5 2-12 1.500-17-1zM490.500 327.600l6 .8" stroke="#3c3c3c" stroke-width="1.100" fill="none"/>
<!-- nose -->
<path d="M455 343c3 3 7 4 11 3 3 1 6 0 8-2" stroke="#2a2a2a" stroke-width="2" fill="none" stroke-linecap="round"/>
<!-- moustache / mouth -->
<path d="M443 354c8-4 28-6 40-2-2 8-9 14-19 14.500-10 0-17-5-21-12.500z" fill="#3a3a3a"/>
<path d="M447 356.500c10-2 22-2.500 32-1-2 6-8 9-14.500 9.500-7 .3-14-3-17.500-8.500z" fill="#fafafa"/>
<path d="M453 356v5M458.500 355.500v7.500M464 355v8.500M469.500 355v7.500M475 355v5" stroke="#9a9a9a" stroke-width=".7"/>
<!-- beard stubble -->
<ellipse cx="461" cy="400" rx="14" ry="6" fill="#333" opacity=".7" filter="url(#pb)"/>
<path d="M450.800 254C440 254 428 259 423.300 266.600 416 278 413 290 413 303c-1 12-2 24-1.200 35 1.200 12 4.200 20 8.200 27 4 11 9 20 15 28 7 9 17 16 27 16 8-1 14-11 18.600-21 5.400-13 9.400-26 11.400-39 1-13 0-27-1-39-2-14-5-26-10.400-36.500C477 266 472 260 466.800 257.500 462 255 456 254 450.800 254z" fill="#000" filter="url(#grain)" opacity=".5"/>
</g>
<rect x="371" y="251" width="1.600" height="166" fill="#000"/>
<rect x="525.700" y="251" width="2.300" height="166" fill="#000"/>
</svg>
<div style="left:624px;top:106px;width:698px;height:578px;background:#f0f0f0;border:1px solid #3a3a3a"></div>
<div style="left:625px;top:107px;width:696px;height:576px;border-top:1px solid #fdfdfd;border-left:1px solid #fdfdfd;border-right:1px solid #6fd5f5;border-bottom:1px solid #6fd5f5"></div>
<div style="left:626px;top:108px;width:694px;height:574px;border-right:1px solid #c4ecf9;border-bottom:1px solid #c4ecf9"></div>
<div style="left:626px;top:108px;width:693px;height:19px;background:linear-gradient(#9ab4d4 0,#a6bfdd 50%,#b6cde8 100%)"></div>
<span class="t" style="left:627.5px;top:111px;font-size:12px;line-height:14px;letter-spacing:-0.125px;">Customer Savings Account(s)</span>
<svg width="13" height="13" viewBox="0 0 13 13" style="left:1304px;top:111px"><defs><linearGradient id="cb" x1="0" y1="0" x2="0" y2="1"><stop offset="0" stop-color="#eab1a4"/><stop offset=".45" stop-color="#d98571"/><stop offset=".5" stop-color="#c4553b"/><stop offset="1" stop-color="#d9856b"/></linearGradient></defs><rect x=".5" y=".5" width="12" height="12" rx="2" fill="url(#cb)" stroke="#5b1c25"/><path d="M4.500 4.500l4 4M8.500 4.500l-4 4" stroke="#4a4f66" stroke-width="2.800" stroke-linecap="square"/><path d="M4.500 4.500l4 4M8.500 4.500l-4 4" stroke="#fff" stroke-width="1.500" stroke-linecap="square"/></svg>
<div style="left:633px;top:148px;width:679px;height:483px;background:#fff;border:1px solid #898c95"></div>
<div class="tabsel" style="left:633px;top:128px;width:53px;height:21px;"></div>
<div class="tab" style="left:685px;top:130px;width:100px;height:18px;"></div>
<span class="t" style="left:640.8px;top:131.5px;font-size:11px;line-height:12px;letter-spacing:-0.419px;">General</span>
<span class="t" style="left:690px;top:133.5px;font-size:11px;line-height:12px;letter-spacing:-0.185px;">Account Statement</span>
<span class="t" style="left:652.3px;top:162px;font-size:12px;line-height:14px;letter-spacing:0.136px;">Customer Name:</span>
<span class="t" style="left:758.6px;top:162px;font-size:12px;line-height:14px;letter-spacing:0.199px;">Mr. Luka Magala</span>
<div class="gb" style="left:649px;top:190px;width:210px;height:81px;"></div>
<div style="left:657px;top:187px;width:124px;height:8px;background:#fff"></div>
<span class="t" style="left:658.4px;top:184px;font-size:13px;line-height:15px;font-weight:700;letter-spacing:-0.026px;">Savings Account(s)</span>
<div style="left:652px;top:200px;width:204px;height:23px;background:linear-gradient(#ffffff 0,#f7f7f7 50%,#ececec 100%);border-top:1px solid #9a9a9a;border-bottom:1px solid #a8a29a;border-left:1px solid #e5e5e5;border-right:1px solid #d8d8d8"></div>
<span class="t" style="left:661px;top:205px;font-size:13px;line-height:15px;font-weight:700;letter-spacing:0.026px;">Account Number</span>
<div style="left:652px;top:223px;width:204px;height:22px;background:#3399ff"></div>
<span class="t" style="left:655.5px;top:228px;font-size:13px;line-height:15px;letter-spacing:-0.136px;color:#fff;">201157</span>
<div class="gb" style="left:865px;top:190px;width:433px;height:81px;"></div>
<div style="left:873px;top:187px;width:156px;height:8px;background:#fff"></div>
<span class="t" style="left:874.2px;top:184px;font-size:13px;line-height:15px;font-weight:700;letter-spacing:0.086px;">Savings Account Details</span>
<span class="t" style="left:874.2px;top:206px;font-size:13px;line-height:15px;letter-spacing:-0.417px;">Savings Product Name:</span>
<span class="t" style="left:1015.3px;top:206px;font-size:13px;line-height:15px;letter-spacing:-0.392px;">Regular Savings</span>
<span class="t" style="left:874.2px;top:229px;font-size:13px;line-height:15px;letter-spacing:-0.617px;">Account Status:</span>
<span class="t" style="left:1015.3px;top:229px;font-size:13px;line-height:15px;letter-spacing:-0.8px;">Active</span>
<span class="t" style="left:874.2px;top:252px;font-size:13px;line-height:15px;letter-spacing:-0.502px;">Account Opened Date:</span>
<span class="t" style="left:1015.3px;top:252px;font-size:13px;line-height:15px;letter-spacing:-0.39px;">2012-03-14</span>
<span class="t" style="left:1099px;top:252px;font-size:13px;line-height:15px;letter-spacing:-0.472px;">Branch:</span>
<span class="t" style="left:1154px;top:252px;font-size:13px;line-height:15px;letter-spacing:-0.437px;">Head Office</span>
<div class="gb" style="left:649px;top:285px;width:320px;height:328px;"></div>
<div style="left:657px;top:282px;width:100px;height:8px;background:#fff"></div>
<span class="t" style="left:658.4px;top:279px;font-size:13px;line-height:15px;font-weight:700;letter-spacing:0.206px;">Interest Details</span>
<span class="t" style="left:658.4px;top:301px;font-size:13px;line-height:15px;letter-spacing:-0.377px;">Interest Calculation Method:</span>
<span class="t" style="left:850px;top:301px;font-size:13px;line-height:15px;letter-spacing:-0.465px;">Average Balance</span>
<span class="t" style="left:658.4px;top:327px;font-size:13px;line-height:15px;letter-spacing:-0.467px;">Interest Rate:</span>
<span class="t" style="left:850px;top:327px;font-size:13px;line-height:15px;letter-spacing:-0.464px;">3% Per Annum.</span>
<span class="t" style="left:658.4px;top:353px;font-size:13px;line-height:15px;letter-spacing:-0.503px;">Interest Calculation Every After:</span>
<span class="t" style="left:850px;top:353px;font-size:13px;line-height:15px;letter-spacing:-0.343px;">1 Month(s)</span>
<span class="t" style="left:658.4px;top:379px;font-size:13px;line-height:15px;letter-spacing:-0.549px;">Interest Posting Every After:</span>
<span class="t" style="left:850px;top:379px;font-size:13px;line-height:15px;letter-spacing:-0.343px;">3 Month(s)</span>
<span class="t" style="left:658.4px;top:405px;font-size:13px;line-height:15px;letter-spacing:-0.365px;">Interest Calculation Min Balance:</span>
<span class="t" style="left:850px;top:405px;font-size:13px;line-height:15px;letter-spacing:-0.343px;">30000.00/=</span>
<span class="t" style="left:658.4px;top:431px;font-size:13px;line-height:15px;letter-spacing:-0.414px;">Last Interest Calculation Date:</span>
<span class="t" style="left:850px;top:431px;font-size:13px;line-height:15px;letter-spacing:-0.305px;">02-04-12</span>
<span class="t" style="left:658.4px;top:457px;font-size:13px;line-height:15px;letter-spacing:-0.502px;">Last Interest Post Date:</span>
<span class="t" style="left:850px;top:457px;font-size:13px;line-height:15px;letter-spacing:-0.385px;">Unknown</span>
<span class="t" style="left:658.4px;top:483px;font-size:13px;line-height:15px;letter-spacing:-0.472px;">Last Interest Post Amount:</span>
<span class="t" style="left:850px;top:483px;font-size:13px;line-height:15px;letter-spacing:-0.518px;">0.00/=</span>
<span class="t" style="left:658.4px;top:509px;font-size:13px;line-height:15px;letter-spacing:-0.439px;">Next Interest Calculation Date:</span>
<span class="t" style="left:850px;top:509px;font-size:13px;line-height:15px;letter-spacing:-0.305px;">30-04-12</span>
<span class="t" style="left:658.4px;top:535px;font-size:13px;line-height:15px;letter-spacing:-0.513px;">Next Interest Post Date:</span>
<span class="t" style="left:850px;top:535px;font-size:13px;line-height:15px;letter-spacing:-0.305px;">31-03-12</span>
<span class="t" style="left:658.4px;top:561px;font-size:13px;line-height:15px;letter-spacing:-0.446px;">Interest Amount Due:</span>
<span class="t" style="left:850px;top:561px;font-size:13px;line-height:15px;letter-spacing:-0.518px;">0.00/=</span>
<span class="t" style="left:658.4px;top:587px;font-size:13px;line-height:15px;letter-spacing:-0.385px;">Total Interest Earned:</span>
<span class="t" style="left:850px;top:587px;font-size:13px;line-height:15px;letter-spacing:-0.518px;">0.00/=</span>
<div class="gb" style="left:979px;top:285px;width:319px;height:328px;"></div>
<div style="left:987px;top:282px;width:104px;height:8px;background:#fff"></div>
<span class="t" style="left:988.6px;top:279px;font-size:13px;line-height:15px;font-weight:700;letter-spacing:0.273px;">Balance Details</span>
<span class="t" style="left:988.4px;top:302px;font-size:13px;line-height:15px;letter-spacing:-0.299px;">Minimum Opening Deposit:</span>
<span class="t" style="left:1203.4px;top:300.5px;font-size:13px;line-height:15px;letter-spacing:-0.518px;">0.00/=</span>
<span class="t" style="left:988.4px;top:326px;font-size:13px;line-height:15px;letter-spacing:-0.328px;">Recommended Deposit Amount:</span>
<span class="t" style="left:1203.4px;top:324.5px;font-size:13px;line-height:15px;letter-spacing:-0.518px;">0.00/=</span>
<span class="t" style="left:988.4px;top:350px;font-size:13px;line-height:15px;letter-spacing:-0.368px;">Maximum Withdraw Amount:</span>
<span class="t" style="left:1203.4px;top:348.5px;font-size:13px;line-height:15px;letter-spacing:-0.518px;">0.00/=</span>
<span class="t" style="left:988.4px;top:374px;font-size:13px;line-height:15px;letter-spacing:-0.363px;">Account Minimum Balance:</span>
<span class="t" style="left:1203.4px;top:374px;font-size:13px;line-height:15px;letter-spacing:-0.373px;">20000.00/=</span>
<span class="t" style="left:988.4px;top:398px;font-size:13px;line-height:15px;letter-spacing:-0.441px;">Last Deposit Date:</span>
<span class="t" style="left:1203.4px;top:398px;font-size:13px;line-height:15px;letter-spacing:-0.34px;">2012-12-14</span>
<span class="t" style="left:988.4px;top:422px;font-size:13px;line-height:15px;letter-spacing:-0.409px;">Last Deposit Amount:</span>
<span class="t" style="left:1203.4px;top:422px;font-size:13px;line-height:15px;letter-spacing:-0.36px;">100000.00/=</span>
<span class="t" style="left:988.4px;top:446px;font-size:13px;line-height:15px;letter-spacing:-0.327px;">Total Deposit Amount:</span>
<span class="t" style="left:1203.4px;top:446px;font-size:13px;line-height:15px;letter-spacing:-0.357px;">3641000.00/=</span>
<span class="t" style="left:988.4px;top:470px;font-size:13px;line-height:15px;letter-spacing:-0.471px;">Last Withdraw Date:</span>
<span class="t" style="left:1203.4px;top:470px;font-size:13px;line-height:15px;letter-spacing:-0.28px;">2012-12-19</span>
<span class="t" style="left:988.4px;top:494px;font-size:13px;line-height:15px;letter-spacing:-0.432px;">Last Withdraw Amount:</span>
<span class="t" style="left:1203.4px;top:494px;font-size:13px;line-height:15px;letter-spacing:-0.403px;">50000.00/=</span>
<span class="t" style="left:988.4px;top:518px;font-size:13px;line-height:15px;letter-spacing:-0.371px;">Total Withdraw Amount:</span>
<span class="t" style="left:1203.4px;top:518px;font-size:13px;line-height:15px;letter-spacing:-0.357px;">2580000.00/=</span>
<span class="t" style="left:988.4px;top:542px;font-size:13px;line-height:15px;letter-spacing:-0.481px;">Amount On Hold:</span>
<span class="t" style="left:1203.4px;top:542px;font-size:13px;line-height:15px;letter-spacing:-0.518px;">0.00/=</span>
<span class="t" style="left:988.4px;top:566px;font-size:13px;line-height:15px;letter-spacing:-0.41px;">Current Available Balance:</span>
<span class="t" style="left:1203.4px;top:565px;font-size:13px;line-height:15px;letter-spacing:-0.518px;">0.00/=</span>
<span class="t" style="left:988.4px;top:590px;font-size:13px;line-height:15px;letter-spacing:-0.455px;">Current Account Balance:</span>
<span class="t" style="left:1203.4px;top:588px;font-size:13px;line-height:15px;letter-spacing:-0.373px;">20000.00/=</span>
<div class="btn" style="left:1001px;top:639px;width:126px;height:33px;"></div>
<div class="btn" style="left:1135px;top:639px;width:83px;height:33px;"></div>
<div class="btn" style="left:1226px;top:639px;width:83px;height:33px;"></div>
<span class="t" style="left:1046.7px;top:646px;font-size:15px;line-height:17px;letter-spacing:-0.111px;">Hold Funds</span>
<span class="t" style="left:1175.6px;top:647px;font-size:15px;line-height:17px;letter-spacing:-0.137px;">Edit</span>
<span class="t" style="left:1257.3px;top:647px;font-size:15px;line-height:17px;letter-spacing:-0.099px;">Cancel</span>
<svg width="44" height="30" viewBox="1002 640 44 30" style="left:1002px;top:640px">
<defs><radialGradient id="hf" cx=".5" cy=".35" r=".75"><stop offset="0" stop-color="#f99"/><stop offset=".6" stop-color="#ee5a5a"/><stop offset="1" stop-color="#d42a2a"/></radialGradient></defs>
<ellipse cx="1023.700" cy="655.500" rx="17.300" ry="11.200" fill="url(#hf)" stroke="#b91212" stroke-width="2.300"/>
<path d="M1013.200 652.200l4.800 6M1019.200 649.200l2.300 7.500M1024.800 648.200l.2 8M1030.200 649.700l-2.200 7.500" stroke="#fff" stroke-width="2.500" stroke-linecap="round"/>
<path d="M1037.800 655.600c-3 1-5.500 3.200-7.800 6" stroke="#fff" stroke-width="2.600" stroke-linecap="round" fill="none"/>
<path d="M1016.300 656.500c3-1.600 9-2 13-.5l2.500 3.500c-1 4-4.500 6.300-8.500 6.300-4.500 0-7.200-4-7-9.300z" fill="#fff"/>
</svg>
<svg width="36" height="28" viewBox="1140 641 36 28" style="left:1140px;top:641px">
<defs><filter id="eb"><feGaussianBlur stdDeviation=".8"/></filter></defs>
<path d="M1145 667.400c6-.6 13-1.400 20-3" stroke="#9a9a9a" stroke-width="1.600" opacity=".6" filter="url(#eb)" fill="none"/>
<path d="M1147.300 662l18.600-15.800 2.500 3-18.600 15.800z" fill="#f5b81e"/>
<path d="M1147.700 662.500l18.600-15.800" stroke="#ffdf70" stroke-width="1.100"/>
<path d="M1149.600 664.700l18.600-15.800" stroke="#d99a0c" stroke-width=".8"/>
<path d="M1165.900 646.200l1.600-1.400 2.500 3-1.600 1.400z" fill="#c7c7c7"/>
<path d="M1167.500 644.800l1.600-1.300c1.400-.4 3 1.400 2.500 3l-1.600 1.300z" fill="#f08a98"/>
<path d="M1147.300 662l2.500 3-5.200 1.700z" fill="#ecd2a6"/>
<path d="M1144.600 666.700l1.700-1.700.8 1z" fill="#3a3a3a"/>
</svg>
<svg width="34" height="30" viewBox="1228 641 34 30" style="left:1228px;top:641px">
<path d="M1230.600 644.600c1-1.400 4-1.200 6.500.8 7 5.500 13 12 18.300 19l-.8.700c-6-6-12.500-11.500-19-15.500-2.500-1.500-5.500-3-5-5z" fill="#d61a1a"/>
<path d="M1259.600 642.500c-8.500 4.500-16 11.500-21.500 20-1.200 2-2 4.500-4 5-1.800.2-1.700-2.500-.9-4.500 4-9 14-17.500 26.400-20.500z" fill="#d31c1c"/>
<path d="M1234.500 664.500c2-5 5.500-9.500 9.500-13" stroke="#f08a8a" stroke-width="1" fill="none" opacity=".8"/>
</svg>
</body></html>
